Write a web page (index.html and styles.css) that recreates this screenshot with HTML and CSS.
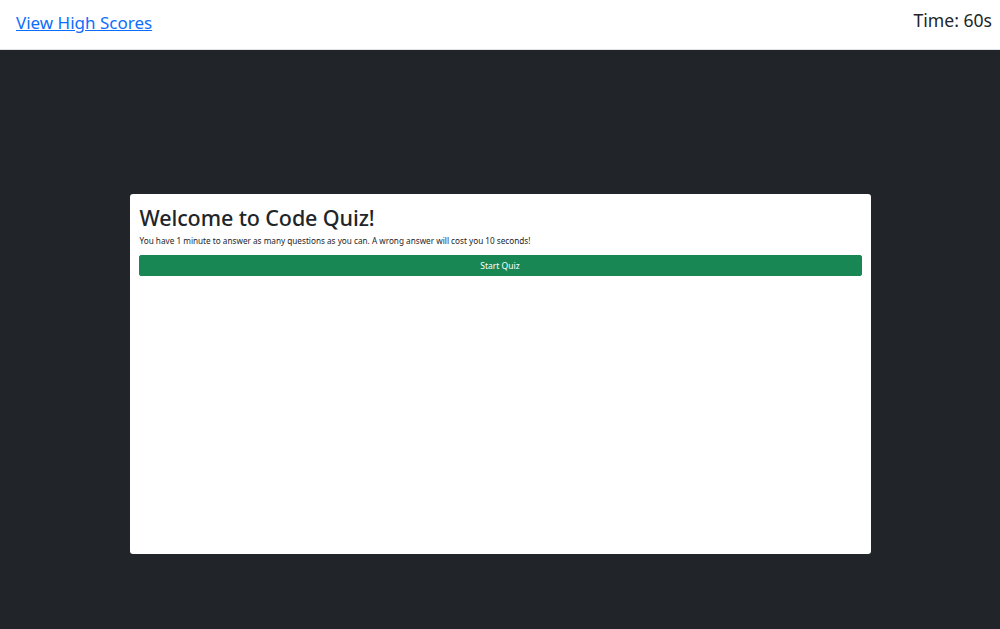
FILE: index.html
```html
<!DOCTYPE html>
<html lang="en">
<head>
<meta charset="utf-8">
<title>Code Quiz</title>
<link rel="stylesheet" href="styles.css">
</head>
<body>
<header class="topbar">
  <a class="scores-link" href="#">View High Scores</a>
  <div class="timer">Time: 60s</div>
</header>
<main class="stage">
  <section class="card">
    <h1 class="card-title">Welcome to Code Quiz!</h1>
    <p class="card-text">You have 1 minute to answer as many questions as you can. A wrong answer will cost you 10 seconds!</p>
    <button class="start-btn" type="button">Start Quiz</button>
  </section>
</main>
</body>
</html>
```

FILE: styles.css
```css
* { box-sizing: border-box; }
html, body { margin: 0; height: 100%; }
body {
  font-family: "Noto Sans", "Open Sans", sans-serif;
  color: #212529;
  background: #212529;
  display: flex;
  flex-direction: column;
}
.topbar {
  height: 50px;
  background: #fff;
  border-bottom: 1px solid #dee2e6;
  display: flex;
  justify-content: space-between;
  align-items: flex-start;
  padding: 8px 8px 0 16px;
}
.scores-link {
  color: #0d6efd;
  font-size: 17px;
  line-height: 30px;
  text-decoration: underline;
}
.timer {
  font-size: 17.6px;
  line-height: 24px;
  color: #212529;
}
.stage {
  flex: 1;
  background: #212529;
  padding-top: 144px;
}
.card {
  width: 741px;
  height: 360px;
  margin: 0 auto;
  background: #fff;
  border-radius: 3px;
  padding: 9px 9px 9px 9px;
}
.card-title {
  margin: 0 0 0 1px;
  font-size: 21.5px;
  font-weight: 500;
  letter-spacing: -0.1px;
  line-height: 30px;
}
.card-text {
  margin: 1px 0 7px 1px;
  font-size: 8.2px;
  line-height: 14px;
}
.start-btn {
  display: block;
  width: 100%;
  height: 21px;
  border: 1px solid #198754;
  background: #198754;
  color: #fff;
  border-radius: 2px;
  font-family: inherit;
  font-size: 8.5px;
  padding: 0;
}
```
